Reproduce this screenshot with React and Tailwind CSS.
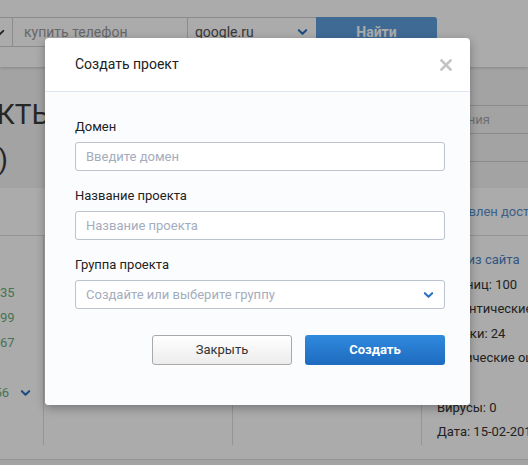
import React from 'react';

const Chevron = ({ className }) => (
  <svg viewBox="0 0 12 8" className={className} fill="none" stroke="currentColor" strokeWidth="2.2" strokeLinecap="round" strokeLinejoin="round">
    <path d="M2 2l4 4 4-4" />
  </svg>
);

const Field = ({ label, placeholder, select = false, first = false }) => (
  <div className={first ? '' : 'mt-[16px]'}>
    <div className="text-[13px] leading-[18px] text-[#222] mb-[6px]">{label}</div>
    <div className="h-[29px] flex items-center justify-between border border-[#bcc3cf] rounded-[3px] bg-white pl-[10px] pr-[10px]">
      <span className="text-[13px] text-[#a3adbd]">{placeholder}</span>
      {select && <Chevron className="w-[11px] h-[8px] text-[#2a73c0]" />}
    </div>
  </div>
);

const stats = [
  { text: 'Анализ сайта', blue: true },
  { text: 'Страниц: 100' },
  { text: 'Семантические ошибки: 3' },
  { text: 'Ссылки: 24' },
  { text: 'Технические ошибки: 5' },
  { text: 'Спам' },
  { text: 'Вирусы: 0' },
  { text: 'Дата: 15-02-2018' },
];

const numbers = ['', '35', '99', '67', '', '56'];

export default function App() {
  return (
    <div className="relative h-[465px] w-[528px] overflow-hidden bg-[#f4f4f4] font-['Roboto',sans-serif]">
      {/* page behind the modal */}
      <header className="h-[67px] bg-white pt-[17px] shadow-[0_1px_3px_rgba(0,0,0,0.18)]">
        <div className="flex h-[30px]">
          <div className="w-[13px] flex items-center overflow-hidden border-y border-r border-[#d0d0d0]">
            <Chevron className="w-[10px] h-[7px] -ml-[5px] shrink-0 text-[#333]" />
          </div>
          <div className="w-[175px] flex items-center pl-[11px] border-y border-r border-[#d0d0d0] text-[14px] text-[#9a9a9a]">
            купить телефон
          </div>
          <div className="w-[128px] flex items-center justify-between pl-[7px] pr-[8px] border-y border-[#d0d0d0] text-[14px] text-[#555]">
            google.ru
            <Chevron className="w-[11px] h-[8px] text-[#2a73c0]" />
          </div>
          <button className="w-[121px] rounded-r-[3px] bg-[#5e9edd] text-[14px] font-bold text-white">Найти</button>
        </div>
      </header>

      <section className="h-[121px] flex justify-between">
        <div className="pt-[25px] flex flex-col text-[28px] leading-[45px] text-[#3a3a3a] whitespace-nowrap">
          <span className="-ml-[76px]">ПРОЕКТЫ</span>
          <span className="-ml-[27px]">(0)</span>
        </div>
        <div className="w-[96px] pt-[38px] text-[13px] text-[#a5a5a5]">
          <div className="h-[29px] flex items-center border-y border-[#cfcfcf] whitespace-nowrap">создания</div>
          <div className="h-[28px] border-b border-[#cfcfcf]"></div>
        </div>
      </section>

      <div className="h-[272px] bg-white border-b border-[#dcdcdc]">
        <div className="h-[48px] flex items-center border-b border-[#dedede]">
          <div className="ml-[437px] text-[13px] text-[#5a8fcc] whitespace-nowrap">Добавлен доступ</div>
        </div>
        <div className="grid grid-cols-[44px_189px_189px_1fr] h-[204px]">
          <div className="border-r border-[#dedede] pt-[19px] pr-[12px] text-[13px] leading-[25px]">
            {numbers.map((n, i) => (
              <div key={i} className="h-[25px] flex justify-end items-center">
                <span className="text-[#68ae7c]">{n}</span>
                <span className="ml-[11px] w-[11px] flex">
                  {i === 5 && <Chevron className="w-[11px] h-[8px] text-[#2a73c0]" />}
                </span>
              </div>
            ))}
          </div>
          <div className="border-r border-[#dedede]"></div>
          <div className="border-r border-[#dedede]"></div>
          <div className="pt-[12px] pl-[15px] text-[13px] leading-[24.6px] whitespace-nowrap">
            {stats.map((s) => (
              <div key={s.text} className={s.blue ? 'text-[#4a80c4]' : 'text-[#333]'}>{s.text}</div>
            ))}
          </div>
        </div>
      </div>

      {/* dim overlay */}
      <div className="absolute inset-0 bg-black/[0.33]"></div>

      {/* modal */}
      <div className="absolute left-[45px] top-[38px] w-[425px] rounded-[4px] bg-white shadow-[0_3px_10px_rgba(0,0,0,0.3)]">
        <div className="h-[54px] flex items-center justify-between pl-[30px] pr-[18px] border-b border-[#dfe6ef]">
          <span className="text-[14px] text-[#222]">Создать проект</span>
          <svg viewBox="0 0 12 12" className="w-[12px] h-[12px]" fill="none" stroke="#c4c4c4" strokeWidth="2.6" strokeLinecap="square">
            <path d="M1.5 1.5l9 9M10.5 1.5l-9 9" />
          </svg>
        </div>
        <div className="bg-[#fbfcfe] rounded-b-[4px] pl-[30px] pr-[25px] pt-[26px] pb-[40px]">
          <Field first label="Домен" placeholder="Введите домен" />
          <Field label="Название проекта" placeholder="Название проекта" />
          <Field label="Группа проекта" placeholder="Создайте или выберите группу" select />
          <div className="mt-[26px] flex justify-end gap-[13px]">
            <button className="w-[140px] h-[30px] rounded-[3px] border border-[#a9a9a9] bg-gradient-to-b from-white to-[#ececec] text-[13px] text-[#333]">
              Закрыть
            </button>
            <button className="w-[140px] h-[30px] rounded-[3px] bg-gradient-to-b from-[#2f8ade] to-[#1e6bbf] text-[13px] font-bold text-white">
              Создать
            </button>
          </div>
        </div>
      </div>
    </div>
  );
}
